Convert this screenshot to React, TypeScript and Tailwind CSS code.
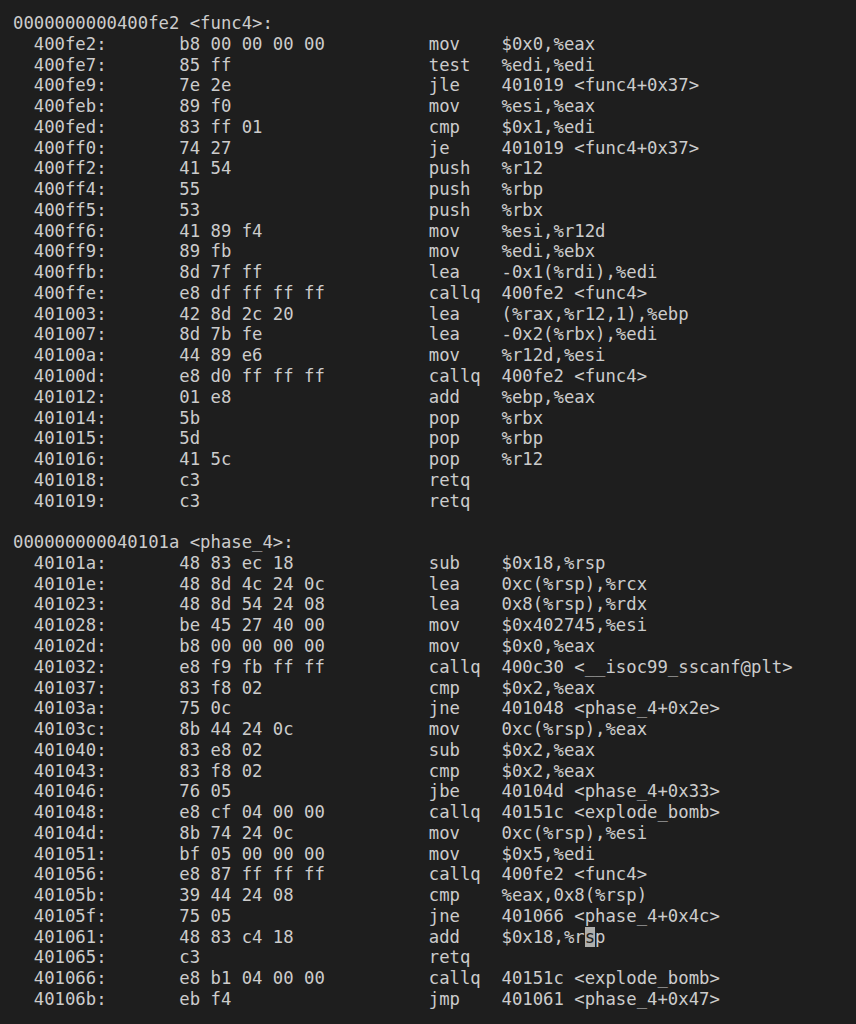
import React from "react";

type Ins = [string, string, string, string];

const func4: Ins[] = [
  ["400fe2", "b8 00 00 00 00", "mov", "$0x0,%eax"],
  ["400fe7", "85 ff", "test", "%edi,%edi"],
  ["400fe9", "7e 2e", "jle", "401019 <func4+0x37>"],
  ["400feb", "89 f0", "mov", "%esi,%eax"],
  ["400fed", "83 ff 01", "cmp", "$0x1,%edi"],
  ["400ff0", "74 27", "je", "401019 <func4+0x37>"],
  ["400ff2", "41 54", "push", "%r12"],
  ["400ff4", "55", "push", "%rbp"],
  ["400ff5", "53", "push", "%rbx"],
  ["400ff6", "41 89 f4", "mov", "%esi,%r12d"],
  ["400ff9", "89 fb", "mov", "%edi,%ebx"],
  ["400ffb", "8d 7f ff", "lea", "-0x1(%rdi),%edi"],
  ["400ffe", "e8 df ff ff ff", "callq", "400fe2 <func4>"],
  ["401003", "42 8d 2c 20", "lea", "(%rax,%r12,1),%ebp"],
  ["401007", "8d 7b fe", "lea", "-0x2(%rbx),%edi"],
  ["40100a", "44 89 e6", "mov", "%r12d,%esi"],
  ["40100d", "e8 d0 ff ff ff", "callq", "400fe2 <func4>"],
  ["401012", "01 e8", "add", "%ebp,%eax"],
  ["401014", "5b", "pop", "%rbx"],
  ["401015", "5d", "pop", "%rbp"],
  ["401016", "41 5c", "pop", "%r12"],
  ["401018", "c3", "retq", ""],
  ["401019", "c3", "retq", ""],
];

const phase4: Ins[] = [
  ["40101a", "48 83 ec 18", "sub", "$0x18,%rsp"],
  ["40101e", "48 8d 4c 24 0c", "lea", "0xc(%rsp),%rcx"],
  ["401023", "48 8d 54 24 08", "lea", "0x8(%rsp),%rdx"],
  ["401028", "be 45 27 40 00", "mov", "$0x402745,%esi"],
  ["40102d", "b8 00 00 00 00", "mov", "$0x0,%eax"],
  ["401032", "e8 f9 fb ff ff", "callq", "400c30 <__isoc99_sscanf@plt>"],
  ["401037", "83 f8 02", "cmp", "$0x2,%eax"],
  ["40103a", "75 0c", "jne", "401048 <phase_4+0x2e>"],
  ["40103c", "8b 44 24 0c", "mov", "0xc(%rsp),%eax"],
  ["401040", "83 e8 02", "sub", "$0x2,%eax"],
  ["401043", "83 f8 02", "cmp", "$0x2,%eax"],
  ["401046", "76 05", "jbe", "40104d <phase_4+0x33>"],
  ["401048", "e8 cf 04 00 00", "callq", "40151c <explode_bomb>"],
  ["40104d", "8b 74 24 0c", "mov", "0xc(%rsp),%esi"],
  ["401051", "bf 05 00 00 00", "mov", "$0x5,%edi"],
  ["401056", "e8 87 ff ff ff", "callq", "400fe2 <func4>"],
  ["40105b", "39 44 24 08", "cmp", "%eax,0x8(%rsp)"],
  ["40105f", "75 05", "jne", "401066 <phase_4+0x4c>"],
  ["401061", "48 83 c4 18", "add", "CURSOR"],
  ["401065", "c3", "retq", ""],
  ["401066", "e8 b1 04 00 00", "callq", "40151c <explode_bomb>"],
  ["40106b", "eb f4", "jmp", "401061 <phase_4+0x47>"],
];

function Row({ ins }: { ins: Ins }) {
  const [addr, bytes, op, args] = ins;
  return (
    <div className="flex whitespace-pre">
      <span className="w-[16ch] pl-[2ch]">{addr}:</span>
      <span className="w-[24ch]">{bytes}</span>
      <span className="w-[7ch]">{op}</span>
      <span>
        {args === "CURSOR" ? (
          <>
            $0x18,%r
            <span className="bg-[#aeafad] text-[#1e1e1e]">s</span>p
          </>
        ) : (
          args
        )}
      </span>
    </div>
  );
}

export default function App() {
  return (
    <div
      className="min-h-screen w-full bg-[#1e1e1e] pl-[13px] pt-[13px] text-[17.27px] leading-[20.77px] text-[#cccccc]"
      style={{ fontFamily: '"DejaVu Sans Mono", "Liberation Mono", monospace' }}
    >
      <div className="whitespace-pre">0000000000400fe2 &lt;func4&gt;:</div>
      {func4.map((i) => (
        <Row key={i[0]} ins={i} />
      ))}
      <div className="h-[20.77px]" />
      <div className="whitespace-pre">000000000040101a &lt;phase_4&gt;:</div>
      {phase4.map((i) => (
        <Row key={i[0]} ins={i} />
      ))}
    </div>
  );
}
